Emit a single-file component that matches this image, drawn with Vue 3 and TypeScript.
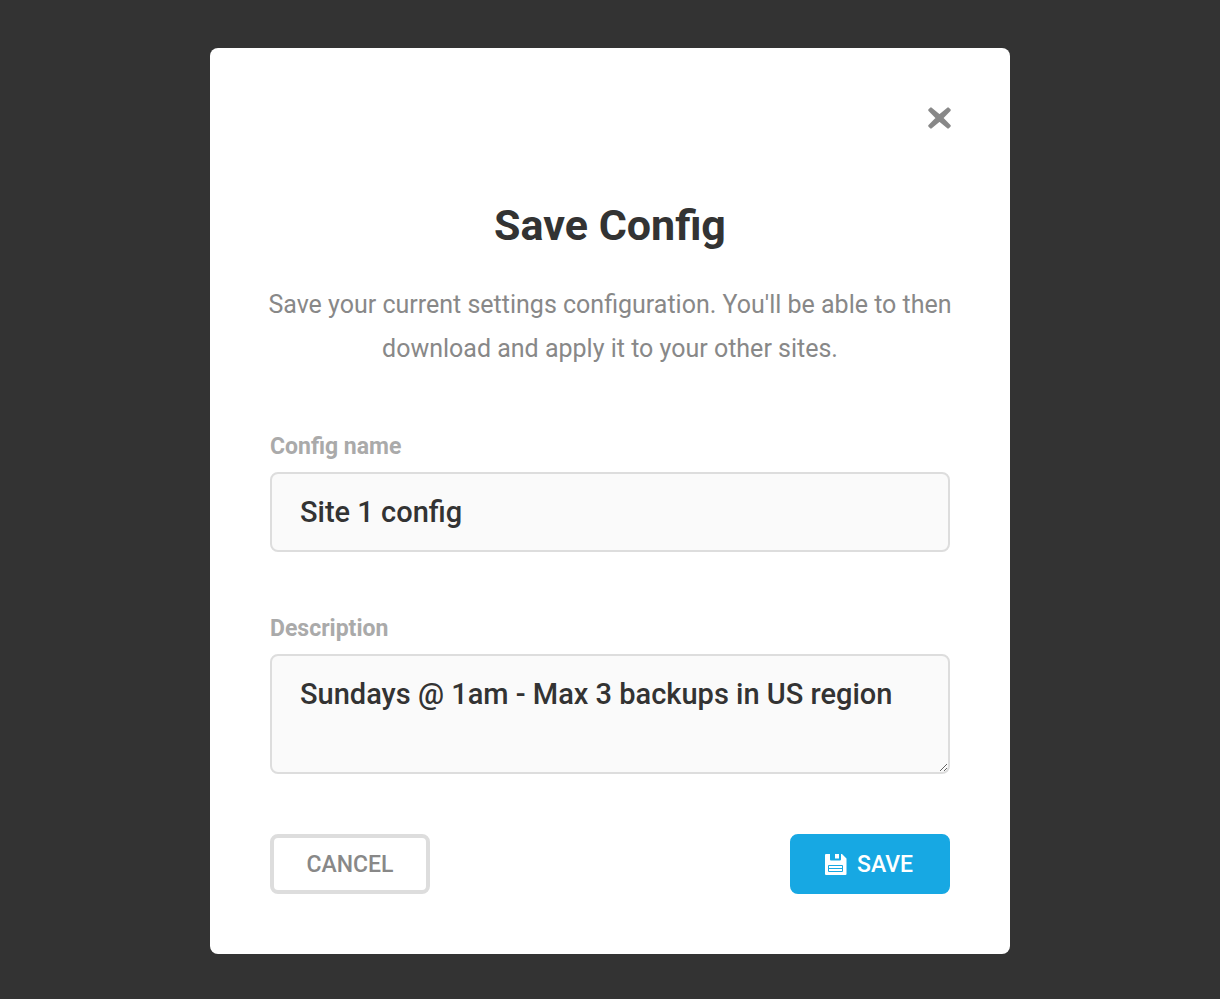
<script setup lang="ts">
import { ref } from 'vue'

const name = ref('Site 1 config')
const description = ref('Sundays @ 1am - Max 3 backups in US region')
</script>

<template>
  <main class="overlay">
    <form class="modal" role="dialog" aria-labelledby="modal-title" @submit.prevent>
      <header class="modal-header">
        <button class="close" type="button" aria-label="Close">
          <svg viewBox="0 0 26 26" width="26" height="26" aria-hidden="true">
            <path
              d="M5 2.6 13.5 9.6 22 2.6 23.6 4.2 16 12 23.6 19.8 22 21.4 13.5 14.4 5 21.4 3.4 19.8 11 12 3.4 4.2Z"
              fill="currentColor"
              stroke="currentColor"
              stroke-width="2.4"
              stroke-linejoin="round"
            />
          </svg>
        </button>
      </header>
      <h1 id="modal-title">Save Config</h1>
      <p class="intro">Save your current settings configuration. You'll be able to then download and apply it to your other sites.</p>
      <div class="field">
        <label for="config-name">Config name</label>
        <input id="config-name" v-model="name" type="text" />
      </div>
      <div class="field">
        <label for="config-description">Description</label>
        <textarea id="config-description" v-model="description"></textarea>
      </div>
      <footer class="actions">
        <button class="button ghost" type="button">CANCEL</button>
        <button class="button primary" type="submit">
          <svg viewBox="0 0 22 22" width="22" height="22" aria-hidden="true">
            <path fill="currentColor" fill-rule="evenodd" d="M1 0H5V5.5Q5 6.5 6 6.5H15Q16 6.5 16 5.5V0H17L21.5 4.5V20Q21.5 21 20.5 21H1Q0 21 0 20V1Q0 0 1 0ZM4 11Q3 11 3 12V17Q3 18 4 18H17Q18 18 18 17V12Q18 11 17 11ZM4 12H17V14H4ZM4 15H17V17H4Z" />
            <path fill="currentColor" d="M10 0H14V4.5H10Z" />
          </svg>
          SAVE
        </button>
      </footer>
    </form>
  </main>
</template>

<style>
body {
  margin: 0;
  background: #333;
}
</style>

<style scoped>
.overlay {
  box-sizing: border-box;
  min-height: 100vh;
  padding: 48px 20px 45px;
  background: #333;
  font-family: Roboto, "Liberation Sans", sans-serif;
}
.modal {
  box-sizing: border-box;
  max-width: 800px;
  margin: 0 auto;
  padding: 58px 60px 60px;
  border-radius: 8px;
  background: #fff;
}
.modal-header {
  display: flex;
  justify-content: flex-end;
  height: 82px;
}
.close {
  width: 26px;
  height: 26px;
  padding: 0;
  border: 0;
  margin-right: -2px;
  background: none;
  color: #888;
}
.close svg {
  display: block;
}
h1 {
  margin: 0;
  color: #333;
  font-size: 43px;
  font-weight: 700;
  line-height: 74px;
  text-align: center;
}
.intro {
  margin: 21px -10px 59px;
  color: #888;
  font-size: 25px;
  line-height: 44px;
  text-align: center;
}
.field {
  margin-bottom: 60px;
}
label {
  display: block;
  margin-bottom: 8px;
  color: #aaa;
  font-size: 23px;
  font-weight: 700;
  line-height: 34px;
}
input,
textarea {
  display: block;
  box-sizing: border-box;
  width: 100%;
  height: 80px;
  padding: 18px 28px;
  border: 2px solid #ddd;
  border-radius: 8px;
  outline: none;
  background: #fafafa;
  color: #333;
  font: 500 29px/40px Roboto, "Liberation Sans", sans-serif;
}
textarea {
  height: 120px;
  overflow: auto;
  resize: vertical;
}
.actions {
  display: flex;
  justify-content: space-between;
}
.button {
  display: flex;
  align-items: center;
  justify-content: center;
  gap: 10px;
  box-sizing: border-box;
  min-width: 160px;
  height: 60px;
  padding: 1px 30px 0;
  border: 4px solid #ddd;
  border-radius: 8px;
  background: #fff;
  color: #888;
  font: 500 23px/32px Roboto, "Liberation Sans", sans-serif;
}
.primary {
  padding-right: 32px;
  border-color: #17a8e3;
  background: #17a8e3;
  color: #fff;
}
</style>
